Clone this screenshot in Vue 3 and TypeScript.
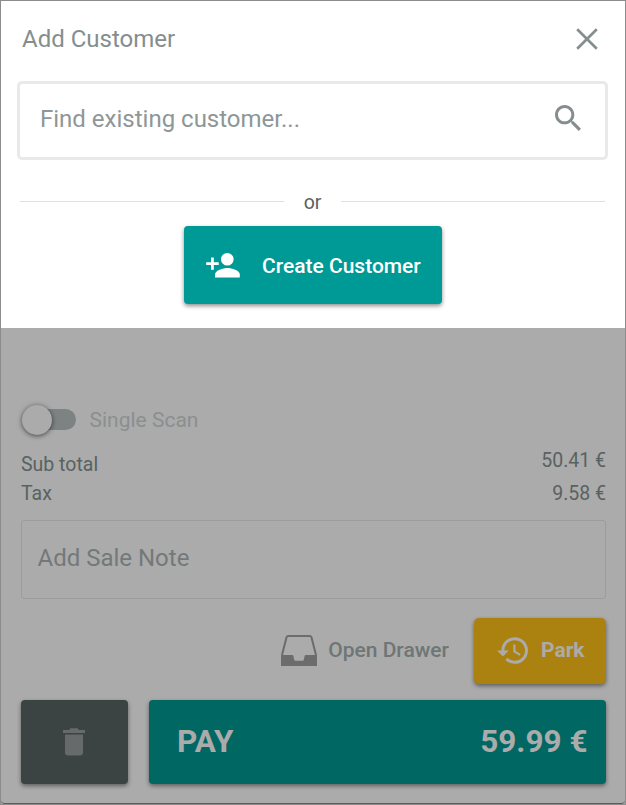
<script setup lang="ts">
import { ref } from 'vue'

interface TotalLine {
  label: string
  amount: string
}

const singleScan = ref<boolean>(false)
const totals: TotalLine[] = [
  { label: 'Sub total', amount: '50.41 €' },
  { label: 'Tax', amount: '9.58 €' },
]
const payable = '59.99 €'
</script>

<template>
  <div class="register">
    <section class="dialog">
      <header class="dialog-head">
        <h1 class="title">Add Customer</h1>
        <svg class="close" viewBox="0 0 22 22"><path d="M1.2 1.2 20.8 20.8M20.8 1.2 1.2 20.8" /></svg>
      </header>
      <div class="search">
        <span class="search-text">Find existing customer...</span>
        <svg class="search-icon" viewBox="3 3 17.5 17.5">
          <path d="M15.5 14h-.79l-.28-.27C15.41 12.59 16 11.11 16 9.5 16 5.91 13.09 3 9.5 3S3 5.91 3 9.5 5.91 16 9.5 16c1.61 0 3.09-.59 4.23-1.57l.27.28v.79l5 4.99L20.49 19l-4.99-5zm-6 0C7.01 14 5 11.99 5 9.5S7.01 5 9.5 5 14 7.01 14 9.5 11.99 14 9.5 14z" />
        </svg>
      </div>
      <div class="divider"><i class="rule" /><span class="or">or</span><i class="rule" /></div>
      <button class="create">
        <svg class="create-icon" viewBox="0 0 34 25">
          <circle cx="21.3" cy="6.3" r="6.3" />
          <path d="M9 24.6v-3.1c0-4.2 8.3-6.4 12.4-6.4s12.4 2.2 12.4 6.4v3.1z" />
          <path d="M5 4.6h2.8v4.7h4.9v2.8H7.8v4.7H5v-4.7H.2V9.3H5z" />
        </svg>
        <span class="create-text">Create Customer</span>
      </button>
    </section>

    <section class="sale">
      <div class="scan">
        <span class="switch" :class="{ on: singleScan }"><i class="knob" /></span>
        <span class="scan-text">Single Scan</span>
      </div>
      <div class="totals">
        <div class="labels"><span v-for="t in totals" :key="t.label">{{ t.label }}</span></div>
        <div class="amounts"><span v-for="t in totals" :key="t.label">{{ t.amount }}</span></div>
      </div>
      <div class="note"><span class="note-text">Add Sale Note</span></div>
      <div class="actions">
        <svg class="drawer-icon" viewBox="0 0 36 31">
          <path class="tray-line" d="M1 20 5.5 2.4Q6 1 7.3 1h21.4q1.3 0 1.8 1.4L35 20" />
          <path class="tray" d="M0 20h11.2q1 0 1.2 1l.7 3.6q.3 1.2 1.4 1.2h7q1.1 0 1.4-1.2l.7-3.6q.2-1 1.2-1H36v11H0z" />
        </svg>
        <span class="drawer-text">Open Drawer</span>
        <button class="park">
          <svg class="park-icon" viewBox="1 3 21 18">
            <path d="M13 3a9 9 0 0 0-9 9H1l3.89 3.89.07.14L9 12H6c0-3.87 3.13-7 7-7s7 3.13 7 7-3.13 7-7 7c-1.93 0-3.68-.79-4.94-2.06l-1.42 1.42A8.954 8.954 0 0 0 13 21a9 9 0 0 0 0-18zm-1 5v5l4.28 2.54.72-1.21-3.5-2.08V8z" />
          </svg>
          <span class="park-text">Park</span>
        </button>
      </div>
      <div class="checkout">
        <button class="trash">
          <svg class="trash-icon" viewBox="0 0 22 28">
            <path d="M2 6.5h18V24.5q0 3-3 3H5q-3 0-3-3zM0 2h6l1.5-1.7h7L16 2h6v3H0z" />
          </svg>
        </button>
        <button class="pay"><span>PAY</span><span>{{ payable }}</span></button>
      </div>
    </section>
  </div>
</template>

<style>
body {
  background: #ababab;
}
</style>

<style scoped>
.register {
  box-sizing: border-box;
  width: 626px;
  height: 805px;
  border: 1px solid #8c8c8c;
  background: #ababab;
  font-family: Roboto, sans-serif;
  color: #596262;
  display: flex;
  flex-direction: column;
}
span {
  white-space: nowrap;
}
button {
  border: 0;
  margin: 0;
  font-family: inherit;
  box-sizing: border-box;
  display: flex;
  align-items: center;
  border-radius: 4px;
  box-shadow: 0 2px 4px rgba(0, 0, 0, 0.45);
}
svg {
  display: block;
  flex: none;
}
.dialog {
  box-sizing: border-box;
  height: 327px;
  background: #fff;
  display: flex;
  flex-direction: column;
}
.dialog-head {
  height: 80px;
  box-sizing: border-box;
  padding: 0 27px 4px 21px;
  display: flex;
  align-items: center;
  justify-content: space-between;
}
.title {
  margin: 0;
  font-size: 24px;
  font-weight: 400;
  line-height: 28px;
  color: #858e8e;
}
.close {
  width: 22px;
  height: 22px;
  stroke: #858e8e;
  stroke-width: 2.7;
  fill: none;
}
.search {
  box-sizing: border-box;
  height: 79px;
  margin: 0 17px 0 16px;
  border: 3px solid #e9e9e9;
  border-radius: 5px;
  padding: 0 24.5px 5px 20px;
  display: flex;
  align-items: center;
  justify-content: space-between;
}
.search-text {
  font-size: 24px;
  line-height: 28px;
  padding-top: 2px;
  color: #8e9696;
}
.search-icon {
  width: 26px;
  height: 26px;
  fill: #858e8e;
}
.divider {
  height: 66px;
  box-sizing: border-box;
  padding: 17px 20px 0 19px;
  display: flex;
  align-items: center;
  gap: 20px;
}
.rule {
  flex: 1;
  height: 1px;
  background: #e0e0e0;
}
.or {
  font-size: 19.5px;
  line-height: 24px;
  padding-top: 2px;
}
.create {
  width: 258px;
  height: 78px;
  margin-left: 183px;
  padding: 0 0 0 22px;
  background: #009a96;
  color: #fff;
  gap: 22px;
}
.create-icon {
  width: 34px;
  height: 25px;
  fill: #fff;
}
.create-text {
  font-size: 21px;
  font-weight: 500;
  line-height: 26px;
  padding-top: 2px;
}
.sale {
  flex: 1;
  padding: 72px 19px 0 20px;
  display: flex;
  flex-direction: column;
  border-bottom: 1px solid #5c5c5c;
  border-radius: 0 0 4px 4px;
}
.scan {
  height: 39px;
  display: flex;
  align-items: center;
  gap: 13.5px;
}
.switch {
  box-sizing: border-box;
  width: 51px;
  height: 21px;
  margin-left: 4px;
  border-radius: 11px;
  background: #7d8383;
  display: flex;
  align-items: center;
}
.knob {
  width: 30px;
  height: 30px;
  margin-left: -3px;
  border-radius: 50%;
  background: #ababab;
  box-shadow: 0 1px 5px rgba(0, 0, 0, 0.6);
  flex: none;
}
.switch.on .knob {
  margin-left: 24px;
}
.scan-text {
  font-size: 21px;
  line-height: 26px;
  color: #8a8f8f;
}
.totals {
  height: 81px;
  display: flex;
  justify-content: space-between;
  font-size: 19.5px;
}
.labels,
.amounts {
  display: flex;
  flex-direction: column;
}
.labels {
  padding-top: 11px;
  line-height: 29px;
}
.amounts {
  padding-top: 5px;
  line-height: 33px;
  text-align: right;
}
.note {
  box-sizing: border-box;
  height: 79px;
  border: 1px solid #9c9c9c;
  border-radius: 3px;
  padding: 0 15.5px 3px;
  display: flex;
  align-items: center;
}
.note-text {
  font-size: 24px;
  line-height: 28px;
  color: #737979;
}
.actions {
  margin-top: 19px;
  height: 66px;
  display: flex;
  align-items: center;
  justify-content: flex-end;
}
.drawer-icon {
  width: 36px;
  height: 31px;
  margin: 0 11px 1px 0;
}
.tray-line {
  fill: none;
  stroke: #6c6c6c;
  stroke-width: 2;
}
.tray {
  fill: #6c6c6c;
}
.drawer-text {
  font-size: 21px;
  font-weight: 500;
  line-height: 26px;
  color: #6e7676;
  margin-right: 25px;
  padding-bottom: 2px;
}
.park {
  width: 132px;
  height: 66px;
  padding: 0 0 0 23px;
  gap: 13px;
  border-radius: 5px;
  background: #ab820f;
  color: #ababab;
}
.park-icon {
  width: 31px;
  height: 27px;
  margin-bottom: 1px;
  fill: #ababab;
}
.park-text {
  font-size: 21px;
  font-weight: 700;
  line-height: 26px;
  padding-bottom: 2px;
}
.checkout {
  margin-top: 16px;
  display: flex;
  gap: 21px;
}
.trash {
  width: 107px;
  height: 84px;
  padding: 0 1px 0 0;
  justify-content: center;
  background: #3b4343;
}
.trash-icon {
  width: 22px;
  height: 28px;
  fill: #666a6a;
}
.pay {
  flex: 1;
  height: 84px;
  padding: 0 18.5px 0 28px;
  justify-content: space-between;
  background: #006763;
  color: #ababab;
  font-size: 31.5px;
  font-weight: 700;
  line-height: 38px;
}
</style>
